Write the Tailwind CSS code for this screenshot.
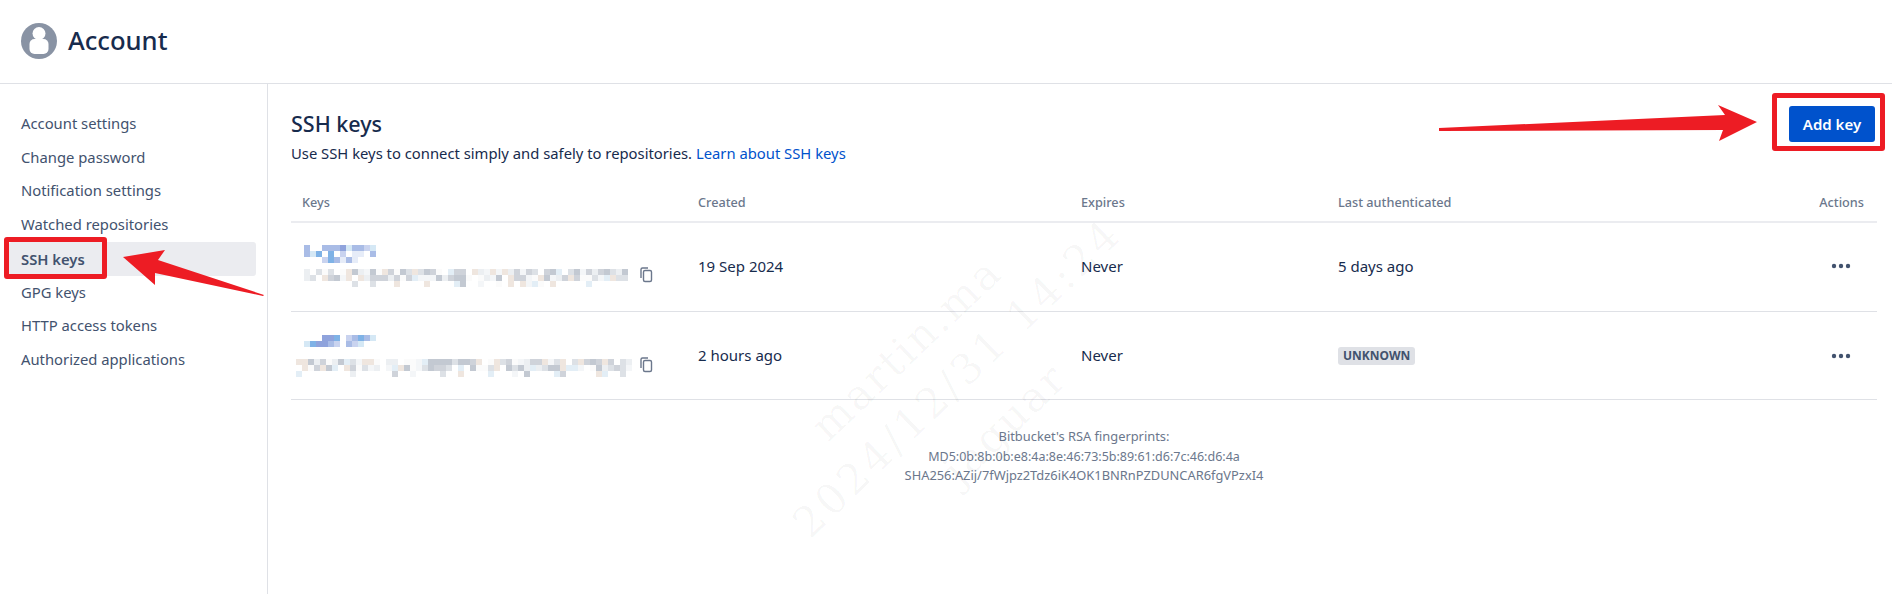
<!DOCTYPE html>
<html lang="en">
<head>
<meta charset="UTF-8">
<title>Account - SSH keys</title>
<script src="https://cdn.jsdelivr.net/npm/@tailwindcss/browser@4"></script>
</head>
<body class="bg-white font-['Noto_Sans',sans-serif] text-[#172b4d] h-[594px] overflow-hidden relative">
    <!-- Header -->
    <header class="h-[84px] border-b border-[#dfe1e6] flex items-center pl-[21px] gap-[11px] pb-[2px]">
        <svg width="36" height="36" viewBox="0 0 36 36">
            <circle cx="18" cy="18" r="18" fill="#8993a4"/>
            <circle cx="18" cy="10.5" r="6.5" fill="#fff"/>
            <rect x="8.5" y="16" width="19" height="15" rx="5" fill="#fff"/>
        </svg>
        <h1 class="text-[25.6px] font-medium leading-none">Account</h1>
    </header>

    <div class="flex h-[510px]">
        <!-- Sidebar -->
        <nav class="w-[268px] shrink-0 border-r border-[#dfe1e6] pt-[23px] pl-[9px] pr-[11px] text-[14.8px] text-[#42526e]">
            <a class="block h-[34px] leading-[33px] pl-[12px]">Account settings</a>
            <a class="block h-[34px] leading-[33px] pl-[12px]">Change password</a>
            <a class="block h-[33px] leading-[30px] pl-[12px]">Notification settings</a>
            <a class="block h-[34px] leading-[33px] pl-[12px]">Watched repositories</a>
            <a class="block h-[34px] leading-[34px] pl-[12px] rounded-[3px] bg-[#ebecf0] font-semibold">SSH keys</a>
            <a class="block h-[34px] leading-[32px] pl-[12px]">GPG keys</a>
            <a class="block h-[33px] leading-[30px] pl-[12px]">HTTP access tokens</a>
            <a class="block h-[34px] leading-[33px] pl-[12px]">Authorized applications</a>
        </nav>

        <!-- Content -->
        <main class="flex-1 pl-[23px] pr-[15px]">
            <div class="flex justify-between h-[105px] pt-[22px]">
                <div>
                    <h2 class="text-[21.5px] font-medium leading-[30px] mt-[3px]">SSH keys</h2>
                    <p class="text-[14.8px] leading-[20px] mt-[4px]">Use SSH keys to connect simply and safely to repositories. <a class="text-[#0052cc]">Learn about SSH keys</a></p>
                </div>
                <button class="h-[36px] w-[86px] mr-[2px] bg-[#0052cc] text-white text-[15px] font-semibold rounded-[3px]">Add key</button>
            </div>

            <div class="grid grid-cols-[396px_383px_257px_1fr_auto] items-center h-[30px] text-[12.7px] font-medium text-[#6b778c] pl-[11px] pr-[13px] border-b-2 border-[#ebecf0] box-content pb-[3px] -mt-[1px]">
                <span>Keys</span><span>Created</span><span>Expires</span><span>Last authenticated</span><span>Actions</span>
            </div>

            <div class="grid grid-cols-[396px_383px_257px_1fr_auto] items-center h-[89px] pb-[2px] text-[15px] pl-[11px] pr-[13px] border-b border-[#dfe1e6]">
                <div class="flex items-end gap-[7px]">
                    <div>
                        <div class="h-[18px] w-[78px] mb-[6px] ml-[2px]" data-mosaic="blue" data-w="12" data-h="3"></div>
                        <div class="h-[18px] w-[328px] ml-[2px]" data-mosaic="gray" data-w="54" data-h="3"></div>
                    </div>
                    <svg class="mb-[4px]" width="14" height="16" viewBox="0 0 14 16" fill="none" stroke="#6b778c" stroke-width="1.4"><rect x="4.5" y="3.5" width="8" height="11" rx="1.5"/><path d="M2 11V2.5A1.5 1.5 0 0 1 3.5 1H9"/></svg>
                </div>
                <span>19 Sep 2024</span>
                <span>Never</span>
                <span>5 days ago</span>
                <svg class="justify-self-end mr-[13px]" width="20" height="6" viewBox="0 0 20 6" fill="#42526e"><circle cx="3" cy="3" r="2.2"/><circle cx="10" cy="3" r="2.2"/><circle cx="17" cy="3" r="2.2"/></svg>
            </div>

            <div class="grid grid-cols-[396px_383px_257px_1fr_auto] items-center h-[88px] text-[15px] pl-[11px] pr-[13px] border-b border-[#dfe1e6]">
                <div class="flex items-end gap-[7px]">
                    <div>
                        <div class="h-[12px] w-[78px] mb-[12px] ml-[2px]" data-mosaic="blue" data-w="12" data-h="2"></div>
                        <div class="h-[18px] w-[336px] -ml-[6px]" data-mosaic="gray" data-w="56" data-h="3"></div>
                    </div>
                    <svg class="mb-[4px]" width="14" height="16" viewBox="0 0 14 16" fill="none" stroke="#6b778c" stroke-width="1.4"><rect x="4.5" y="3.5" width="8" height="11" rx="1.5"/><path d="M2 11V2.5A1.5 1.5 0 0 1 3.5 1H9"/></svg>
                </div>
                <span>2 hours ago</span>
                <span>Never</span>
                <span class="justify-self-start bg-[#dfe1e6] text-[#42526e] text-[12px] font-bold leading-[18px] px-[5px] rounded-[3px]">UNKNOWN</span>
                <svg class="justify-self-end mr-[13px]" width="20" height="6" viewBox="0 0 20 6" fill="#42526e"><circle cx="3" cy="3" r="2.2"/><circle cx="10" cy="3" r="2.2"/><circle cx="17" cy="3" r="2.2"/></svg>
            </div>

            <div class="text-center text-[12.86px] leading-[19.5px] text-[#6b778c] pt-[27px]">
                <p>Bitbucket's RSA fingerprints:</p>
                <p class="text-[12.5px]">MD5:0b:8b:0b:e8:4a:8e:46:73:5b:89:61:d6:7c:46:d6:4a</p>
                <p>SHA256:AZij/7fWjpz2Tdz6iK4OK1BNRnPZDUNCAR6fgVPzxI4</p>
            </div>
        </main>
    </div>

    <!-- Watermark -->
    <svg class="absolute left-0 top-0 pointer-events-none" width="1892" height="594" font-family="DejaVu Serif, serif" font-size="42" fill="#000" fill-opacity="0.035">
        <text transform="translate(828,443) rotate(-43.5)" textLength="241">martin.ma</text>
        <text transform="translate(810,540) rotate(-44)" textLength="433">2024/12/31 14:24</text>
        <text transform="translate(960,487) rotate(-44)" textLength="150">jaguar</text>
    </svg>

    <!-- Screenshot annotations: red boxes and arrows -->
    <div class="absolute left-[4px] top-[237px] w-[103px] h-[42px] border-[5px] border-[#ed1c24] rounded-[3px]"></div>
    <div class="absolute left-[1772px] top-[93px] w-[113px] h-[58px] border-[5px] border-[#ed1c24] rounded-[3px]"></div>
    <svg class="absolute left-0 top-0 pointer-events-none" width="1892" height="594" fill="#ed1c24">
        <polygon points="123,257 165,250 158,260 264,295 263,296 155,273 155,285"/>
        <polygon points="1439,128 1725,115 1718,105 1757,122 1719,141 1723,130 1439,131"/>
    </svg>

    <script>
        // pixelated key names, the blur in the shot is just noise
        const palettes = {
            blue: ['#8fa3dc', '#a9bce6', '#c9d3ef', '#e6ecf8', '#ffffff', '#7fb2e6', '#d5e8f5', '#ffffff'],
            gray: ['#cfd3da', '#dde1e6', '#eceff2', '#f4f6f8', '#ffffff', '#fbfbfb', '#c3c9d2', '#efe6df', '#e3eef6']
        };
        let seed = 7;
        const next = () => (seed = (seed * 16807) % 2147483647);
        document.querySelectorAll('[data-mosaic]').forEach((el) => {
            const colors = palettes[el.dataset.mosaic];
            const w = +el.dataset.w, h = +el.dataset.h;
            let rects = '';
            for (let y = 0; y < h; y++) {
                for (let x = 0; x < w; x++) {
                    // last row is mostly empty, only descenders reach it
                    const empty = h > 2 && y === h - 1 && next() % 10 < 7;
                    const fill = empty ? '#ffffff' : colors[next() % colors.length];
                    rects += `<rect x="${x * 6}" y="${y * 6}" width="6" height="6" fill="${fill}"/>`;
                }
            }
            el.innerHTML = `<svg width="${w * 6}" height="${h * 6}" style="display:block">${rects}</svg>`;
        });
    </script>
</body>
</html>
